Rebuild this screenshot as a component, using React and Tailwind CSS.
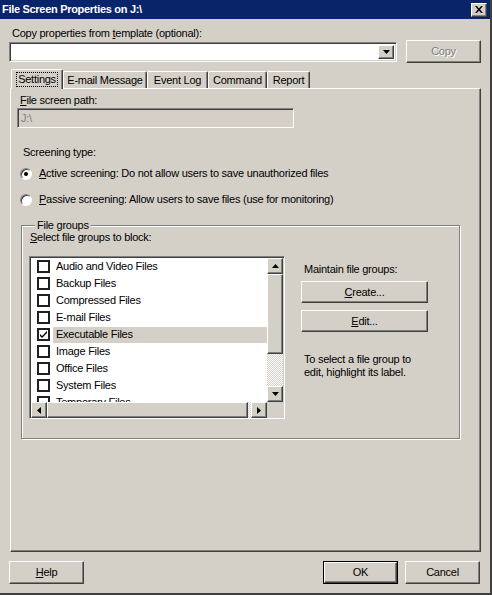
import React from 'react';

// Windows classic 3D borders
const RAISED = 'border border-t-white border-l-white border-r-[#404040] border-b-[#404040] shadow-[inset_-1px_-1px_0_#808080]';
const SUNKEN = 'border border-t-[#808080] border-l-[#808080] border-r-white border-b-white shadow-[inset_1px_1px_0_#404040,inset_-1px_-1px_0_#d4d0c8]';
const DITHER = 'bg-[repeating-conic-gradient(#ffffff_0%_25%,#d4d0c8_0%_50%)] bg-size-[2px_2px]';

const FILE_GROUPS = [
  { name: 'Audio and Video Files' },
  { name: 'Backup Files' },
  { name: 'Compressed Files' },
  { name: 'E-mail Files' },
  { name: 'Executable Files', checked: true, selected: true },
  { name: 'Image Files' },
  { name: 'Office Files' },
  { name: 'System Files' },
  { name: 'Temporary Files' },
];

const TABS = [
  { label: 'Settings', w: 'w-[52px]', active: true },
  { label: 'E-mail Message', w: 'w-[84px]' },
  { label: 'Event Log', w: 'w-[61px]' },
  { label: 'Command', w: 'w-[59px]' },
  { label: 'Report', w: 'w-[43px]' },
];

export default function App() {
  return (
    <div className="w-[492px] h-[595px] bg-[#d4d0c8] border-r-2 border-b-2 border-r-[#404040] border-b-[#404040] font-['Liberation_Sans',Arial,sans-serif] text-[11px] leading-[13px] tracking-[-0.25px] text-black flex flex-col overflow-hidden select-none">
      {/* Title bar */}
      <div className="h-[19px] bg-[#0a246a] flex items-center justify-between pl-[2px] pr-[3px] shrink-0">
        <span className="text-white font-bold text-[11px] tracking-[-0.3px]">File Screen Properties on J:\</span>
        <div className={`w-[16px] h-[14px] bg-[#d4d0c8] flex items-center justify-center ${RAISED}`}>
          <svg width="8" height="7" viewBox="0 0 8 7">
            <path d="M0 0h2l2 2.5L6 0h2L5 3.5 8 7H6L4 4.5 2 7H0l3-3.5z" fill="#000" />
          </svg>
        </div>
      </div>

      <div className="flex flex-col px-[9px]">
        {/* Template */}
        <div className="mt-[8px] pl-[3px] h-[13px]">
          Copy properties from <u>t</u>emplate (optional):
        </div>
        <div className="flex items-center gap-[9px] h-[23px]">
          <div className={`flex-1 h-[20px] bg-white flex justify-end p-[2px] ${SUNKEN}`}>
            <div className={`w-[16px] h-full bg-[#d4d0c8] flex items-center justify-center ${RAISED}`}>
              <svg width="7" height="4" viewBox="0 0 7 4"><path d="M0 0h7L3.5 4z" fill="#000" /></svg>
            </div>
          </div>
          <Btn className="w-[75px] h-[23px] text-[#808080] [text-shadow:1px_1px_0_#fff]">Copy</Btn>
        </div>

        {/* Tabs */}
        <div className="mt-[6px] h-[19px] flex items-end pl-[2px] relative z-10">
          {TABS.map(t => (
            <div key={t.label}
              className={`${t.w} flex items-center justify-center border-t border-l border-t-white border-l-white border-r border-r-[#404040] shadow-[inset_-1px_0_0_#808080] rounded-t-[2px] ${t.active ? 'h-[20px] -mb-px bg-[#d4d0c8]' : 'h-[17px]'}`}>
              {t.active
                ? <span className="outline-1 outline-dotted outline-black px-[1px]">{t.label}</span>
                : t.label}
            </div>
          ))}
        </div>

        {/* Tab page */}
        <div className={`ml-[1px] h-[464px] flex flex-col pl-[6px] ${RAISED}`}>
          <div className="mt-[5px] pl-[3px]"><u>F</u>ile screen path:</div>
          <div className={`mt-[1px] w-[277px] h-[20px] flex items-center pl-[3px] text-[#808080] ${SUNKEN}`}>J:\</div>

          <div className="mt-[18px] pl-[6px]">Screening type:</div>
          <Radio checked className="mt-[8px]">
            <u>A</u>ctive screening: Do not allow users to save unauthorized files
          </Radio>
          <Radio className="mt-[13px]">
            <u>P</u>assive screening: Allow users to save files (use for monitoring)
          </Radio>

          {/* File groups */}
          <fieldset className="mt-[13px] ml-[4px] w-[439px] border border-[#808080] shadow-[1px_1px_0_#fff,inset_1px_1px_0_#fff] pl-[7px] pb-[19px]">
            <legend className="ml-[6px] px-[2px] bg-[#d4d0c8]">File groups</legend>
            <div className="-mt-[1px] pl-[1px]"><u>S</u>elect file groups to block:</div>
            <div className="mt-[12px] flex">
              <FileList />
              <div className="ml-[16px] pt-[7px] flex flex-col">
                <div className="pl-[3px]">Maintain file groups:</div>
                <Btn className="mt-[5px] w-[127px] h-[22px]"><span><u>C</u>reate...</span></Btn>
                <Btn className="mt-[7px] w-[127px] h-[22px]"><span><u>E</u>dit...</span></Btn>
                <p className="mt-[21px] pl-[3px]">
                  To select a file group to<br />edit, highlight its label.
                </p>
              </div>
            </div>
          </fieldset>
        </div>

        {/* Footer buttons */}
        <div className="mt-[9px] flex items-center">
          <Btn className="w-[75px] h-[23px]"><span><u>H</u>elp</span></Btn>
          <div className="ml-auto flex gap-[7px] pr-[1px]">
            <div className="w-[75px] h-[23px] border border-black flex">
              <Btn className="flex-1">OK</Btn>
            </div>
            <Btn className="w-[75px] h-[23px]">Cancel</Btn>
          </div>
        </div>
      </div>
    </div>
  );
}

function Btn({ children, className = '' }) {
  return (
    <div className={`bg-[#d4d0c8] flex items-center justify-center ${RAISED} ${className}`}>{children}</div>
  );
}

function Radio({ checked, children, className = '' }) {
  return (
    <div className={`flex items-center pl-[3px] h-[13px] ${className}`}>
      <div className="w-[12px] h-[12px] rounded-full bg-white border border-t-[#808080] border-l-[#808080] border-r-white border-b-white shadow-[inset_1px_1px_0_#404040] flex items-center justify-center">
        {checked && <div className="w-[4px] h-[4px] rounded-full bg-black" />}
      </div>
      <span className="ml-[7px]">{children}</span>
    </div>
  );
}

function Arrow({ dir }) {
  const d = {
    up: 'M0 4h7L3.5 0z',
    down: 'M0 0h7L3.5 4z',
    left: 'M4 0v7L0 3.5z',
    right: 'M0 0v7L4 3.5z',
  }[dir];
  const vert = dir === 'up' || dir === 'down';
  return (
    <div className={`w-[16px] h-[16px] shrink-0 bg-[#d4d0c8] flex items-center justify-center ${RAISED}`}>
      <svg width={vert ? 7 : 4} height={vert ? 4 : 7} viewBox={vert ? '0 0 7 4' : '0 0 4 7'}>
        <path d={d} fill="#000" />
      </svg>
    </div>
  );
}

function FileList() {
  return (
    <div className={`w-[256px] h-[163px] bg-white p-[1px] flex flex-col ${SUNKEN}`}>
      <div className="flex h-[144px]">
        <div className="flex-1 overflow-hidden">
          {FILE_GROUPS.map(g => (
            <div key={g.name} className="h-[17px] flex items-center pl-[6px] shrink-0">
              <div className="w-[13px] h-[13px] border-2 border-[#202020] bg-white flex items-center justify-center shrink-0">
                {g.checked && (
                  <svg width="7" height="7" viewBox="0 0 7 7">
                    <path d="M0 3l2 2 5-5v2L2 7 0 5z" fill="#000" />
                  </svg>
                )}
              </div>
              <div className={`ml-[3px] flex-1 h-[16px] flex items-center pl-[3px] ${g.selected ? 'bg-[#d4d0c8]' : ''}`}>{g.name}</div>
            </div>
          ))}
        </div>
        <div className="w-[16px] flex flex-col">
          <Arrow dir="up" />
          <div className={`h-[80px] shrink-0 bg-[#d4d0c8] ${RAISED}`} />
          <div className={`flex-1 ${DITHER}`} />
          <Arrow dir="down" />
        </div>
      </div>
      <div className="flex h-[16px]">
        <Arrow dir="left" />
        <div className={`flex-1 bg-[#d4d0c8] ${RAISED}`} />
        <div className={`w-[3px] ${DITHER}`} />
        <Arrow dir="right" />
        <div className="w-[16px] bg-[#d4d0c8]" />
      </div>
    </div>
  );
}
